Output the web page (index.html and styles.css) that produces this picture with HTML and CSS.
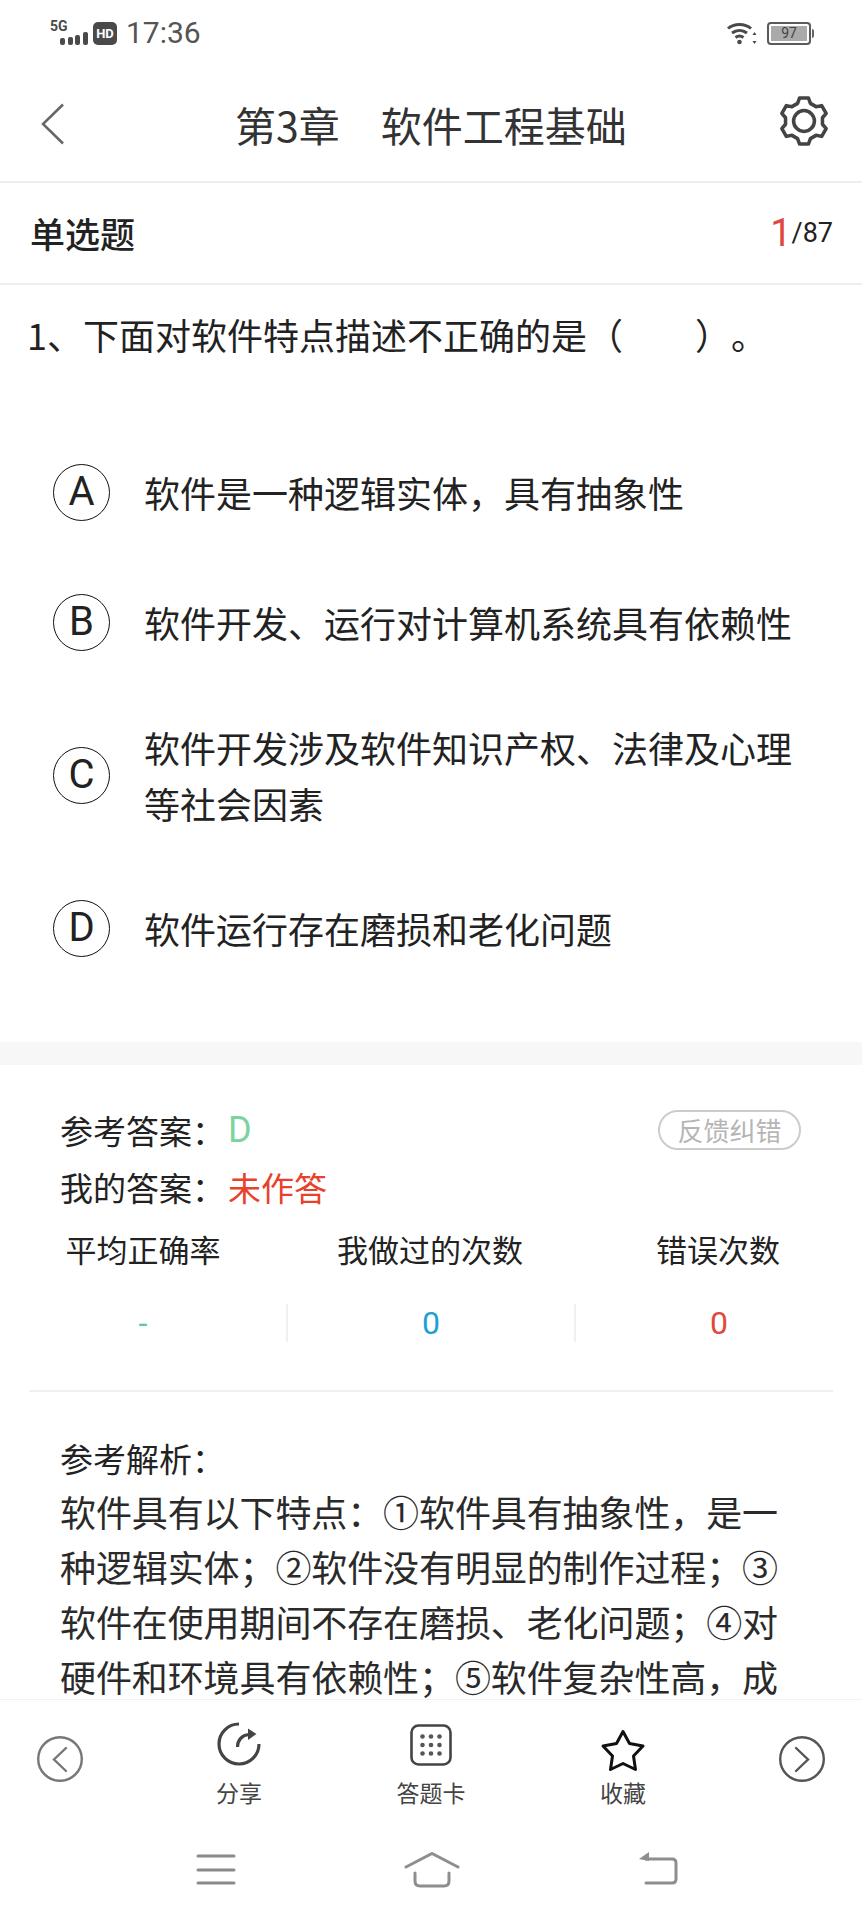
FILE: index.html
```html
<!DOCTYPE html>
<html lang="zh-CN">
<head>
    <meta charset="UTF-8">
    <meta name="viewport" content="width=device-width, initial-scale=1.0">
    <title>第3章 软件工程基础</title>
    <link rel="stylesheet" href="styles.css">
</head>
<body>
    <div class="status-bar">
        <div class="signal">
            <span class="signal-label">5G</span>
            <svg class="signal-bars" width="38" height="13" viewBox="0 0 38 13">
                <rect x="10" y="6" width="5" height="7" rx="2"/>
                <rect x="18" y="5" width="5" height="8" rx="2"/>
                <rect x="25" y="3" width="5" height="10" rx="2"/>
                <rect x="33" y="0" width="5" height="13" rx="2"/>
            </svg>
        </div>
        <span class="hd">HD</span>
        <span class="clock">17:36</span>
        <svg class="wifi" width="30" height="23" viewBox="0 0 30 23" fill="none" stroke="#4a4a4a" stroke-width="3">
            <path d="M1 6.500C7 1 18 1 24 6.500"/>
            <path d="M5 11C9.500 7.500 15.500 7.500 20 11"/>
            <path d="M8.500 15.500C11 13.700 14 13.700 16.500 15.500"/>
            <circle cx="12.500" cy="20" r="2.300" fill="#4a4a4a" stroke="none"/>
            <path d="M27.500 10l2 3h-4zM27.500 22l2-3h-4z" fill="#4a4a4a" stroke="none"/>
        </svg>
        <div class="battery">
            <div class="battery-body"><span class="battery-level">97</span></div>
            <span class="battery-nub"></span>
        </div>
    </div>

    <header class="title-bar">
        <svg class="back" width="24" height="42" viewBox="0 0 24 42" fill="none" stroke="#666" stroke-width="2.500">
            <path d="M22 1.500L2 21l20 19.500"/>
        </svg>
        <h1 class="title">第3章　软件工程基础</h1>
        <svg class="gear" width="50" height="50" viewBox="0 0 48 48" fill="none" stroke="#444" stroke-width="3.400" stroke-linejoin="round">
            <path d="M17.840 7.090L19.710 1.910H28.290L30.160 7.090L35.570 10.210L40.980 9.240L45.270 16.670L41.730 20.870V27.130L45.270 31.330L40.980 38.760L35.570 37.790L30.160 40.910L28.290 46.090H19.710L17.840 40.910L12.430 37.790L7.020 38.760L2.730 31.330L6.270 27.130V20.870L2.730 16.670L7.020 9.240L12.430 10.210Z"/>
            <circle cx="24" cy="24" r="10"/>
        </svg>
    </header>

    <div class="type-row">
        <span class="type-name">单选题</span>
        <span class="progress"><span class="progress-now">1</span>/87</span>
    </div>

    <main class="scroll">
        <p class="question">1、下面对软件特点描述不正确的是（&emsp;&emsp;）。</p>

        <div class="options">
            <div class="option">
                <span class="option-key">A</span>
                <span class="option-text">软件是一种逻辑实体，具有抽象性</span>
            </div>
            <div class="option">
                <span class="option-key">B</span>
                <span class="option-text">软件开发、运行对计算机系统具有依赖性</span>
            </div>
            <div class="option">
                <span class="option-key">C</span>
                <span class="option-text">软件开发涉及软件知识产权、法律及心理等社会因素</span>
            </div>
            <div class="option">
                <span class="option-key">D</span>
                <span class="option-text">软件运行存在磨损和老化问题</span>
            </div>
        </div>

        <div class="band"></div>

        <section class="answers">
            <div class="answer-row">
                <span>参考答案：</span><span class="answer-right">D</span>
                <button class="feedback">反馈纠错</button>
            </div>
            <div class="answer-row">
                <span>我的答案：</span><span class="answer-none">未作答</span>
            </div>
        </section>

        <section class="stats">
            <div class="stat">
                <div class="stat-label">平均正确率</div>
                <div class="stat-value stat-green">-</div>
            </div>
            <div class="stat">
                <div class="stat-label">我做过的次数</div>
                <div class="stat-value stat-blue stat-split">0</div>
            </div>
            <div class="stat">
                <div class="stat-label">错误次数</div>
                <div class="stat-value stat-red stat-split">0</div>
            </div>
        </section>

        <hr class="rule">

        <section class="analysis">
            <h2 class="analysis-title">参考解析：</h2>
            <p class="analysis-text">软件具有以下特点：①软件具有抽象性，是一种逻辑实体；②软件没有明显的制作过程；③软件在使用期间不存在磨损、老化问题；④对硬件和环境具有依赖性；⑤软件复杂性高，成</p>
        </section>
    </main>

    <div class="tab-bar">
        <svg class="round-btn" width="46" height="46" viewBox="0 0 46 46" fill="none" stroke="#777" stroke-width="2.400">
            <circle cx="23" cy="23" r="21.800"/>
            <path d="M29 12L17 23.500 29 35" stroke-linecap="round"/>
        </svg>
        <div class="tab">
            <svg width="48" height="52" viewBox="0 0 48 52" fill="none" stroke="#444" stroke-width="3.200">
                <path d="M24 4A20 20 0 1 0 44 24"/>
                <path d="M22.500 27C22.500 20 27 15 34 14.500"/>
                <path d="M33 8.500L41.500 14 33 20Z" fill="#444" stroke="none"/>
            </svg>
            <span class="tab-label">分享</span>
        </div>
        <div class="tab">
            <svg width="48" height="52" viewBox="0 0 48 52">
                <rect x="4.500" y="5.500" width="39" height="39" rx="7" fill="none" stroke="#444" stroke-width="2.600"/>
                <g fill="#555">
                    <circle cx="15.500" cy="16.500" r="2.300"/><circle cx="24" cy="16.500" r="2.300"/><circle cx="32.500" cy="16.500" r="2.300"/>
                    <circle cx="15.500" cy="25" r="2.300"/><circle cx="24" cy="25" r="2.300"/><circle cx="32.500" cy="25" r="2.300"/>
                    <circle cx="15.500" cy="33.500" r="2.300"/><circle cx="24" cy="33.500" r="2.300"/><circle cx="32.500" cy="33.500" r="2.300"/>
                </g>
            </svg>
            <span class="tab-label">答题卡</span>
        </div>
        <div class="tab">
            <svg width="48" height="52" viewBox="0 0 48 52" fill="none" stroke="#111" stroke-width="3" stroke-linejoin="round">
                <path d="M24 11.500L30.500 23.500 44 26 34.500 36 36.500 49.500 24 43.500 11.500 49.500 13.500 36 4 26 17.500 23.500Z"/>
            </svg>
            <span class="tab-label">收藏</span>
        </div>
        <svg class="round-btn" width="46" height="46" viewBox="0 0 46 46" fill="none" stroke="#555" stroke-width="2.400">
            <circle cx="23" cy="23" r="21.800"/>
            <path d="M17 12L29 23.500 17 35" stroke-linecap="round"/>
        </svg>
    </div>

    <nav class="nav-bar">
        <svg width="40" height="34" viewBox="0 0 40 34" stroke="#8a8a8a" stroke-width="3" stroke-linecap="round">
            <path d="M2 4H38M2 18H38M2 31H38"/>
        </svg>
        <svg class="nav-home" width="56" height="36" viewBox="0 0 56 36" fill="none" stroke="#8e8e8e" stroke-width="3" stroke-linecap="round">
            <path d="M2 15L28 1.500 54 15"/>
            <path d="M11 21V29Q11 34 16 34H40Q45 34 45 29V21"/>
        </svg>
        <svg width="40" height="34" viewBox="0 0 40 34" fill="none" stroke="#8e8e8e" stroke-width="3" stroke-linecap="round">
            <path d="M8 7H34Q38 7 38 11V27Q38 31 34 31H8"/>
            <path d="M11 0L1 7 11 9Z" fill="#8e8e8e" stroke="none"/>
        </svg>
    </nav>
</body>
</html>
```

FILE: styles.css
```css
body {
    margin: 0;
    width: 862px;
    height: 1920px;
    display: flex;
    flex-direction: column;
    overflow: hidden;
    background: #fff;
    color: #222;
    font-family: "Noto Sans CJK SC", "Roboto", sans-serif;
    text-spacing-trim: space-all;
}

/* status bar */
.status-bar {
    height: 66px;
    display: flex;
    align-items: center;
    padding: 0 48px 0 50px;
    box-sizing: border-box;
}
.signal {
    width: 38px;
    height: 24px;
    display: flex;
    flex-direction: column;
    justify-content: space-between;
}
.signal-label {
    font-family: "Roboto", sans-serif;
    font-size: 14px;
    font-weight: 700;
    line-height: 11px;
    color: #4a4a4a;
}
.signal-bars {
    fill: #4a4a4a;
}
.hd {
    width: 24px;
    height: 23px;
    margin-left: 5px;
    border-radius: 5px;
    background: #4a4a4a;
    color: #fff;
    font-family: "Roboto", sans-serif;
    font-size: 13px;
    font-weight: 700;
    line-height: 23px;
    text-align: center;
}
.clock {
    margin-left: 9px;
    font-family: "Roboto", sans-serif;
    font-size: 30px;
    line-height: 34px;
    color: #555;
}
.wifi {
    margin-left: auto;
}
.battery {
    margin-left: 10px;
    display: flex;
    align-items: center;
    gap: 1px;
}
.battery-body {
    width: 44px;
    height: 23px;
    box-sizing: border-box;
    padding: 2px;
    border: 2px solid #5a5a5a;
    border-radius: 4px;
}
.battery-level {
    display: block;
    height: 15px;
    background: #aaa;
    color: #444;
    font-family: "Roboto", sans-serif;
    font-size: 14px;
    line-height: 15px;
    text-align: center;
}
.battery-nub {
    width: 2px;
    height: 9px;
    border-radius: 0 2px 2px 0;
    background: #666;
}

/* title */
.title-bar {
    height: 117px;
    flex: none;
    display: grid;
    grid-template-columns: 1fr auto 1fr;
    align-items: center;
    padding: 0 33px;
    box-sizing: border-box;
    border-bottom: 2px solid #eee;
}
.back {
    margin-left: 8px;
}
.title {
    margin: 0;
    font-size: 41px;
    font-weight: 400;
    line-height: 56px;
    color: #333;
}
.gear {
    justify-self: end;
    margin-top: -5px;
}

.type-row {
    height: 102px;
    flex: none;
    display: flex;
    align-items: center;
    justify-content: space-between;
    padding: 0 29px 0 30px;
    box-sizing: border-box;
    border-bottom: 2px solid #eee;
}
.type-name {
    font-size: 35px;
    font-weight: 500;
    line-height: 48px;
}
.progress {
    display: flex;
    align-items: center;
    font-family: "Roboto", sans-serif;
    font-size: 27px;
    line-height: 48px;
}
.progress-now {
    font-size: 38px;
    color: #e0483e;
}

.scroll {
    flex: 1;
    min-height: 0;
    overflow: hidden;
}

.question {
    margin: 21px 0 97px;
    padding-left: 27px;
    font-size: 36px;
    line-height: 56px;
    color: #222;
}

/* options */
.options {
    display: flex;
    flex-direction: column;
    gap: 64px;
    padding: 0 60px 0 53px;
}
.option {
    min-height: 66px;
    display: flex;
    align-items: center;
    gap: 34px;
}
.option-key {
    flex: none;
    width: 57px;
    height: 57px;
    box-sizing: border-box;
    border: 1.500px solid #111;
    border-radius: 50%;
    font-family: "Roboto", sans-serif;
    font-size: 40px;
    line-height: 54px;
    text-align: center;
}
.option-text {
    font-size: 36px;
    line-height: 56px;
    color: #222;
}

.band {
    height: 23px;
    margin-top: 81px;
    background: #f7f7f7;
}

/* answers */
.answers {
    padding: 37px 61px 0 60px;
    font-size: 33px;
}
.answer-row {
    display: flex;
    align-items: center;
    height: 57px;
    line-height: 57px;
    color: #222;
}
.answer-right {
    margin-left: 3px;
    font-family: "Roboto", sans-serif;
    font-size: 36px;
    color: #7dd3a0;
}
.answer-none {
    margin-left: 3px;
    color: #e8412c;
}
.feedback {
    width: 143px;
    height: 40px;
    margin: -2px 0 0 auto;
    padding: 0;
    border: 2px solid #ccc;
    border-radius: 20px;
    background: #fff;
    color: #b5b5b5;
    font-family: inherit;
    font-size: 26px;
    line-height: 36px;
}

/* stats */
.stats {
    display: grid;
    grid-template-columns: 286px 288px 288px;
    margin-top: 10px;
}
.stat {
    text-align: center;
}
.stat-label {
    font-size: 31px;
    line-height: 46px;
    color: #222;
}
.stat-value {
    height: 38px;
    margin-top: 32px;
    font-family: "Roboto", sans-serif;
    font-size: 32px;
    line-height: 38px;
}
.stat-split {
    border-left: 2px solid #f0f0f0;
}
.stat-green {
    color: #5fc9a0;
}
.stat-blue {
    color: #1f9fd6;
}
.stat-red {
    color: #e0483e;
}

.rule {
    height: 2px;
    margin: 48px 29px 0;
    border: 0;
    background: #f0f0f0;
}

/* analysis */
.analysis {
    padding: 0 62px 0 60px;
}
.analysis-title {
    margin: 43px 0 0;
    font-size: 33px;
    font-weight: 400;
    line-height: 46px;
    color: #222;
}
.analysis-text {
    margin: 3px 0 0;
    font-size: 36px;
    letter-spacing: -0.1px;
    line-height: 55px;
    color: #2a2a2a;
}

/* bottom */
.tab-bar {
    height: 121px;
    flex: none;
    display: flex;
    align-items: flex-start;
    gap: 120px;
    padding: 20px 0 0 37px;
    box-sizing: border-box;
    border-top: 1px solid #f2f2f2;
}
.round-btn {
    flex: none;
    margin-top: 16px;
}
.tab {
    width: 72px;
    flex: none;
    display: flex;
    flex-direction: column;
    align-items: center;
    gap: 5px;
}
.tab-label {
    font-size: 23px;
    line-height: 30px;
    color: #444;
    white-space: nowrap;
}
.nav-bar {
    height: 100px;
    flex: none;
    display: flex;
    align-items: flex-start;
    padding: 32px 0 0 196px;
    box-sizing: border-box;
}
.nav-home {
    margin: 0 178px 0 168px;
}
```
